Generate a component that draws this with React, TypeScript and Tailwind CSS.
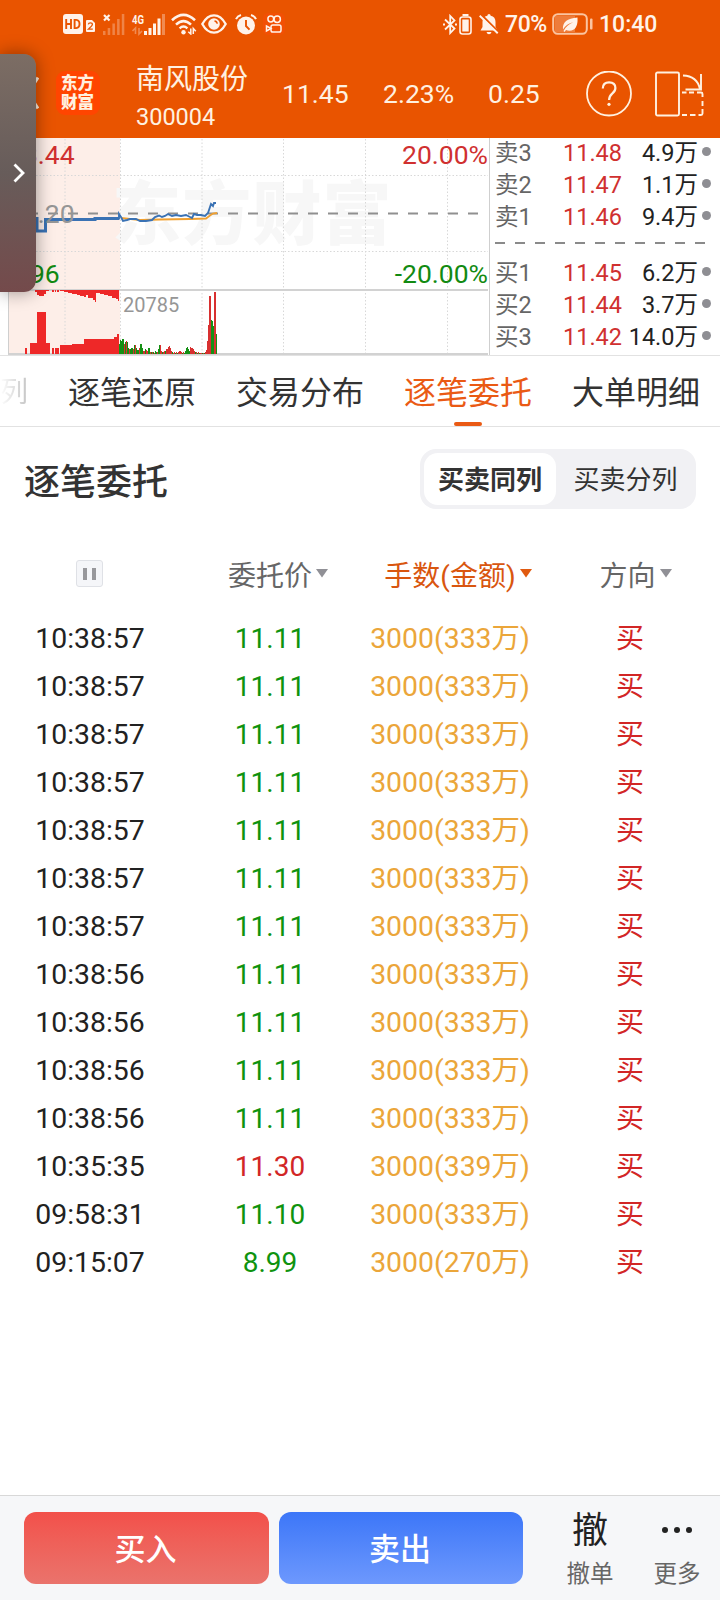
import React from "react";
import { clsx } from "clsx";

interface Order {
  time: string;
  price: string;
  lots: string;
  up?: boolean;
}

interface Quote {
  label: string;
  price: string;
  volume: string;
}

const orders: Order[] = [
  { time: "10:38:57", price: "11.11", lots: "3000(333万)" },
  { time: "10:38:57", price: "11.11", lots: "3000(333万)" },
  { time: "10:38:57", price: "11.11", lots: "3000(333万)" },
  { time: "10:38:57", price: "11.11", lots: "3000(333万)" },
  { time: "10:38:57", price: "11.11", lots: "3000(333万)" },
  { time: "10:38:57", price: "11.11", lots: "3000(333万)" },
  { time: "10:38:57", price: "11.11", lots: "3000(333万)" },
  { time: "10:38:56", price: "11.11", lots: "3000(333万)" },
  { time: "10:38:56", price: "11.11", lots: "3000(333万)" },
  { time: "10:38:56", price: "11.11", lots: "3000(333万)" },
  { time: "10:38:56", price: "11.11", lots: "3000(333万)" },
  { time: "10:35:35", price: "11.30", lots: "3000(339万)", up: true },
  { time: "09:58:31", price: "11.10", lots: "3000(333万)" },
  { time: "09:15:07", price: "8.99", lots: "3000(270万)" },
];

const asks: Quote[] = [
  { label: "卖3", price: "11.48", volume: "4.9万" },
  { label: "卖2", price: "11.47", volume: "1.1万" },
  { label: "卖1", price: "11.46", volume: "9.4万" },
];

const bids: Quote[] = [
  { label: "买1", price: "11.45", volume: "6.2万" },
  { label: "买2", price: "11.44", volume: "3.7万" },
  { label: "买3", price: "11.42", volume: "14.0万" },
];

const tabs = ["逐笔还原", "交易分布", "逐笔委托", "大单明细"];

// [x, width, height] of the call auction bars
const auctionBars = [
  [25, 2, 6],
  [30, 7, 11],
  [37, 9, 42],
  [46, 4, 11],
  [52, 2, 6],
  [55, 4, 6],
  [60, 12, 9],
  [72, 12, 10],
  [84, 30, 15],
  [114, 3, 17],
  [117, 2, 20],
];

const hangingBars = [
  [35, 2, 2],
  [37, 2, 5],
  [39, 5, 6],
  [44, 2, 4],
  [46, 3, 1],
  [52, 2, 2],
  [55, 1, 2],
  [57, 2, 2],
  [60, 4, 1],
  [64, 4, 2],
  [68, 4, 3],
  [72, 5, 4],
  [77, 3, 5],
  [80, 4, 6],
  [84, 2, 7],
  [86, 2, 5],
  [88, 5, 8],
  [93, 2, 10],
  [95, 1, 12],
  [96, 4, 3],
  [100, 4, 4],
  [104, 4, 5],
  [108, 4, 6],
  [112, 4, 8],
  [116, 2, 9],
  [118, 1, 11],
];

// one bar per pixel from x=119, the letter marks the colour
const session =
  "g10 g14 g13 g15 g15 r10 g12 r13 g12 g6 r5 g5 g6 g6 r5 g9 r9 g6 g4 g4 r6 g10 g10 g6 r3 r3 g5 r4 r3 g6 g6 r2 g2 r2 g2 r1 g3 g2 r2 g5 g9 r9 r3 g2 r2 r3 g3 r5 r5 r7 r8 r6 r3 g2 r1 r2 g1 r2 g1 r2 r3 r3 r2 g1 r2 g1 g3 g6 g7 g5 g3 r7 r6 r6 r5 r3 g2 r2 g1 r2 g1 r1 r1 g1 r1 g1 r2 r4 r13 r29 r58 r58 g34 g33 g28 r62 r62 g20".split(
    " "
  );

function HdIcon() {
  return (
    <svg width="20" height="20" viewBox="0 0 20 20">
      <rect width="20" height="20" rx="3" fill="#fff3ea" />
      <path
        d="M3.2 5v10M8 5v10M3.2 10H8M11.6 5.9v8.2h1.6q3.3-.3 3.3-4.1t-3.3-4.1z"
        stroke="#e95400"
        strokeWidth="1.9"
        fill="none"
      />
    </svg>
  );
}

function SimIcon() {
  return (
    <svg width="9" height="12" viewBox="0 0 9 12">
      <path d="M0 1q0-1 1-1h5l3 3v8q0 1-1 1H1q-1 0-1-1z" fill="#fff3ea" />
      <path d="M2.3 4.3q.3-1.4 2.1-1.4 2 0 2 1.7 0 1-4 4.6h4.4" stroke="#e95400" strokeWidth="1.3" fill="none" />
    </svg>
  );
}

function NoSignalIcon() {
  return (
    <svg width="22" height="21" viewBox="0 0 22 21">
      <path d="M1 1l5.500 5.500M6.500 1L1 6.500" stroke="#fff3ea" strokeWidth="2.200" />
      <g fill="#fff3ea" opacity=".3">
        <rect x="0" y="17" width="2.500" height="4" />
        <rect x="4.700" y="14" width="2.500" height="7" />
        <rect x="9.400" y="9.500" width="2.500" height="11.500" />
        <rect x="14.100" y="5" width="2.500" height="16" />
        <rect x="18.800" y="0" width="2.500" height="21" />
      </g>
    </svg>
  );
}

function SignalIcon() {
  return (
    <svg className="overflow-visible" width="34" height="21" viewBox="0 0 34 21">
      <text x="0" y="9.500" fontSize="13" fontWeight="700" textLength="12" lengthAdjust="spacingAndGlyphs" fill="#fff3ea">
        4G
      </text>
      <path d="M3.500 20v-6l-3 3M7 14v6l3-3" stroke="#fff3ea" strokeWidth="1.600" fill="none" opacity=".35" />
      <g fill="#fff3ea">
        <rect x="12" y="17" width="3" height="4" />
        <rect x="16.500" y="14" width="3" height="7" />
        <rect x="21" y="9.500" width="3" height="11.500" />
        <rect x="25.500" y="4.500" width="3" height="16.500" />
        <rect x="30" y="0" width="3" height="21" opacity=".35" />
      </g>
    </svg>
  );
}

function WifiIcon() {
  return (
    <svg width="26" height="22" viewBox="0 0 26 22" fill="none" stroke="#fff3ea">
      <path d="M1 7.200Q12.500-3.600 24 7.200" strokeWidth="2.600" />
      <path d="M5 11.600Q12.500 4.600 20 11.600" strokeWidth="2.500" />
      <path d="M8.600 15.400Q12.500 11.800 16.400 15.400" strokeWidth="2.400" />
      <circle cx="12.500" cy="19.300" r="2.200" fill="#fff3ea" stroke="none" />
      <path d="M19.800 15.500v5.500l-2.500-2.300M22.300 21v-5.500l2.500 2.700" strokeWidth="1.500" />
    </svg>
  );
}

function EyeIcon() {
  return (
    <svg width="26" height="20" viewBox="0 0 26 20" fill="none" stroke="#fff3ea">
      <path d="M1.300 10Q6 1.300 13 1.300T24.700 10Q20 18.700 13 18.700T1.300 10z" strokeWidth="2.300" />
      <circle cx="13" cy="10" r="5.800" fill="#fff3ea" stroke="none" />
      <path d="M13.500 7q2.500.3 2.700 2.800" stroke="#e95400" strokeWidth="1.400" />
    </svg>
  );
}

function AlarmIcon() {
  return (
    <svg width="22" height="21" viewBox="0 0 22 21" fill="none" stroke="#fff3ea">
      <circle cx="11" cy="11.500" r="9" fill="#fff3ea" stroke="none" />
      <path d="M1 5.200Q2.500 2 6 1M21 5.200Q19.500 2 16 1" strokeWidth="2" />
      <path d="M11 6v6l3.500 3.700" stroke="#e95400" strokeWidth="1.900" />
    </svg>
  );
}

function VideoAppIcon() {
  return (
    <svg width="22" height="22" viewBox="0 0 22 22" fill="none" stroke="#fff3ea" strokeWidth="1.500">
      <rect width="22" height="22" rx="5" fill="#f25004" stroke="none" />
      <circle cx="7.800" cy="6" r="2.900" />
      <circle cx="14.200" cy="6.300" r="3.200" />
      <rect x="8" y="12" width="10" height="7" rx="1.800" />
      <path d="M8 15.500L3.500 13v5z" />
    </svg>
  );
}

function StatusBar() {
  return (
    <div className="flex h-12 items-center text-[23px] text-[#fff3ea]">
      <div className="flex w-[443px] items-center pl-[63px]">
        <HdIcon />
        <div className="mt-1 ml-[3px]">
          <SimIcon />
        </div>
        <div className="ml-[8px]">
          <NoSignalIcon />
        </div>
        <div className="ml-[7px]">
          <SignalIcon />
        </div>
        <div className="ml-[5px]">
          <WifiIcon />
        </div>
        <div className="ml-[4px]">
          <EyeIcon />
        </div>
        <div className="ml-[8px]">
          <AlarmIcon />
        </div>
        <div className="ml-[6px]">
          <VideoAppIcon />
        </div>
      </div>
      <svg width="14" height="21" viewBox="0 0 14 21" fill="none" stroke="#fff3ea" strokeWidth="1.800">
        <path d="M2 5.500l9.500 9L7.200 19V2l4.300 4.500L2 15.500" />
        <path d="M0 10.500h2M12 10.500h2" strokeWidth="2" />
      </svg>
      <svg className="ml-[2px]" width="13" height="21" viewBox="0 0 13 21">
        <rect x="3.500" width="6" height="2" fill="#fff3ea" />
        <rect x="1" y="3" width="11" height="17" rx="2.500" fill="none" stroke="#fff3ea" strokeWidth="1.600" />
        <rect x="3.300" y="5.500" width="6.400" height="12" fill="#fff3ea" />
      </svg>
      <svg className="ml-[7px]" width="20" height="21" viewBox="0 0 20 21">
        <path
          d="M10 0q1.500 0 1.700 1.700 4.800 1 4.800 6.300v5l2 3.500H1.500l2-3.500V8q0-5.300 4.800-6.300Q8.500 0 10 0zM7.500 18h5q-.6 2.300-2.500 2.300T7.500 18z"
          fill="#fff3ea"
        />
        <path d="M2 .5l18 18" stroke="#e95400" strokeWidth="2.200" />
        <path d="M.7 1.800l18 17.500" stroke="#fff3ea" strokeWidth="1.900" />
      </svg>
      <span className="mt-[3px] ml-[6px] w-[47px] font-medium tracking-[-0.4px]">70%</span>
      <svg width="42" height="22" viewBox="0 0 42 22">
        <rect x="3" y="3" width="20" height="16" fill="#fff3ea" opacity=".25" />
        <rect x="1.200" y="1.200" width="33.600" height="19.600" rx="4.500" fill="none" stroke="#fbc4a0" strokeWidth="2" />
        <rect x="38" y="5.500" width="2.500" height="11" rx="1" fill="#fbc4a0" />
        <path
          d="M25.500 4.500q.8 13-8 13.300-2 0-3.500-.8l-1.500 2-1-1q3.200-6.400 9.800-8.800-7 1.500-10.300 7.300Q9.800 5.500 25.500 4.500z"
          fill="#fff3ea"
        />
      </svg>
      <span className="mt-[3px] ml-[5px] font-medium">10:40</span>
    </div>
  );
}

function Header() {
  return (
    <div className="flex h-[90px] text-[#fff1e0]">
      <div className="flex w-[136px] items-start pt-[23px]">
        <svg className="mt-[5px] ml-[27px]" width="12" height="34" viewBox="0 0 12 34">
          <path d="M11 1.500L1 17l10 15.500" fill="none" stroke="#fff1e0" strokeWidth="3" />
        </svg>
        <div className="ml-[17px] flex h-[44px] w-[44px] flex-col items-center justify-center rounded-[9px] bg-[#ff4500] pr-px text-[16.500px] leading-[19px] font-black">
          <span>东方</span>
          <span>财富</span>
        </div>
      </div>
      <div className="flex w-[146px] flex-col pt-[13px]">
        <span className="text-[28px] leading-[38px]">南风股份</span>
        <span className="text-[23.500px] leading-[37px]">300004</span>
      </div>
      <div className="flex h-[92px] items-center text-[26.500px]">
        <span className="w-[101px]">11.45</span>
        <span className="w-[105px]">2.23%</span>
        <span className="w-[98px]">0.25</span>
        <svg width="46" height="46" viewBox="0 0 46 46" fill="none" stroke="#fff1e0" strokeWidth="1.800">
          <circle cx="23" cy="22.500" r="22" />
          <path d="M16.800 17.500q0-6.200 6.300-6.200t6.300 5.700q0 3-3.200 5.600-3.100 2.700-3.100 6.400" strokeWidth="2.200" />
          <circle cx="23" cy="33.300" r="1.600" fill="#fff1e0" stroke="none" />
        </svg>
        <svg className="ml-[23px]" width="49" height="46" viewBox="0 0 49 46" fill="none" stroke="#fff1e0" strokeWidth="1.900">
          <rect x="1" y="1.500" width="23" height="43" rx="1.500" />
          <path d="M27 21.500h4.500M34 21.500h5M42 21.500h4q1.500 0 1.500 1.500v3M47.500 30v5M47.500 38v4.500q0 1.500-1.500 1.500h-2.500M27 44h5M35 44h5.500" />
          <path d="M28 4.500Q42 5 45 18M46 3v15.500H30.500" />
        </svg>
      </div>
    </div>
  );
}

function Chart() {
  return (
    <svg className="h-[217px] w-[490px] shrink-0" viewBox="0 138 490 217">
      <rect x="8" y="138" width="112" height="216" fill="#fdeee8" />
      <text x="112" y="239" fontSize="69" fontWeight="900" letterSpacing="1.200" fill="#f7f7f7">
        东方财富
      </text>
      <g stroke="#d8d8d8" strokeDasharray="1.500 2">
        {[65, 120.5, 202, 283.5, 365.5, 447.5].map((x) => (
          <path key={x} d={`M${x} 139V353`} />
        ))}
        <path d="M8 175.500H488M8 251.500H488" />
      </g>
      <path d="M8 213.500H480" stroke="#909090" strokeWidth="2" strokeDasharray="10 10" />
      <path d="M8 290H488M8 354H488" stroke="#d2d2d2" strokeWidth="2" />
      <path d="M8.500 290V354M489.500 138V355" stroke="#cfcfcf" />

      <path
        d="M121 218L140 220 160 219.500 190 219 206 218.500 210 215.500 213 213.500 217 213"
        fill="none"
        stroke="#f0a030"
        strokeWidth="1.800"
      />
      <path d="M30 218.500H37V231H45.500V219.500H95V218.500H119" fill="none" stroke="#3a72b4" strokeWidth="3" />
      <path
        d="M95 218.500H119V214L121 217 123 221 127 220 130 219 136 219 140 221 146 221 152 220 155 217 159 215.500 162 217 165 216 168 214 172 216 176 215 181 216 186 215 190 217 192 218 194 214 197 215 201 215 205 216 208 213 210 207 211 204 213 206 214 203 216 203"
        fill="none"
        stroke="#3a72b4"
        strokeWidth="1.900"
      />

      <g fill="#ee2828">
        {hangingBars.map(([x, w, h]) => (
          <rect key={x} x={x} y="290" width={w} height={h} />
        ))}
        {auctionBars.map(([x, w, h]) => (
          <rect key={x} x={x} y={354 - h} width={w} height={h} />
        ))}
      </g>
      {session.map((bar, i) => {
        const h = Number(bar.slice(1));
        return (
          <rect
            key={i}
            x={119 + i}
            y={354 - h}
            width="1"
            height={h}
            fill={bar[0] === "g" ? "#159015" : "#d83030"}
          />
        );
      })}

      <g fontSize="26.500">
        <text x="8" y="164" fill="#d03030">13.44</text>
        <text x="8" y="222.500" fill="#969696">11.20</text>
        <text x="8" y="283" fill="#128a12">8.96</text>
        <text x="488" y="164" textAnchor="end" fill="#d03030">20.00%</text>
        <text x="488" y="283" textAnchor="end" fill="#128a12">-20.00%</text>
      </g>
      <text x="123" y="312" fontSize="20" fill="#969696">20785</text>
    </svg>
  );
}

function QuoteRow({ label, price, volume }: Quote) {
  return (
    <div className="flex h-8 items-center text-[23.500px]">
      <span className="w-[50px] text-[#666]">{label}</span>
      <span className="w-[77px] text-right text-[#d03030]">{price}</span>
      <span className="w-[76px] text-right text-[#222]">{volume}</span>
      <span className="-mt-[5px] ml-[4px] h-[9px] w-[9px] rounded-full bg-[#8e8e93]" />
    </div>
  );
}

function OrderBook() {
  return (
    <div className="flex w-[230px] shrink-0 flex-col pl-[5px]">
      <div>
        {asks.map((q) => (
          <QuoteRow key={q.label} {...q} />
        ))}
      </div>
      <svg className="h-6" width="212" height="24">
        <path d="M0 9H212" stroke="#8a8a8a" strokeWidth="1.800" strokeDasharray="10 10" />
      </svg>
      {bids.map((q) => (
        <QuoteRow key={q.label} {...q} />
      ))}
    </div>
  );
}

function Tabs() {
  return (
    <div className="flex h-[72px] border-y border-[#e2e2e2] text-[32px] leading-[74px] text-[#333]">
      <span className="w-[68px] bg-linear-to-r from-white to-[#c4c4c4] to-[28px] bg-clip-text text-[28px] text-transparent">
        列
      </span>
      <div className="flex gap-10">
        {tabs.map((tab) => {
          const active = tab === "逐笔委托";
          return (
            <div
              key={tab}
              className={clsx(
                "flex w-32 shrink-0 flex-col items-center whitespace-nowrap",
                active && "text-[#ea5a14]"
              )}
            >
              <span className="h-[66px]">{tab}</span>
              {active && <span className="h-1 w-7 rounded-full bg-[#ea5a14]" />}
            </div>
          );
        })}
      </div>
    </div>
  );
}

function HeadCell({ text, active }: { text: string; active?: boolean }) {
  return (
    <div className={clsx("flex items-center justify-center", active ? "text-[#d9560f]" : "text-[#666]")}>
      <span className="mt-[6px]">{text}</span>
      <svg className="-mr-[16px] ml-[4px]" width="12" height="9" viewBox="0 0 12 9">
        <path d="M0 0h12L6 8.500z" fill={active ? "#e05a10" : "#909096"} />
      </svg>
    </div>
  );
}

function OrderTable() {
  return (
    <div className="text-[28px]">
      <div className="grid h-[78px] grid-cols-[179px_182px_178px_177px] pb-[1px]">
        <div className="flex items-center justify-center">
          <div className="flex h-[27px] w-[27px] items-center justify-center gap-[5px] rounded-[3px] border border-[#dfe1e6] bg-[#f5f6f9]">
            <span className="h-3 w-1 bg-[#98989c]" />
            <span className="h-3 w-1 bg-[#98989c]" />
          </div>
        </div>
        <HeadCell text="委托价" />
        <HeadCell text="手数(金额)" active />
        <HeadCell text="方向" />
      </div>
      <div className="pt-[2px]">
        {orders.map((order, i) => (
          <div key={i} className="grid h-12 grid-cols-4 items-center text-center">
            <span className="text-[28.400px] text-[#222]">{order.time}</span>
            <span className={order.up ? "text-[#d22626]" : "text-[#0f930f]"}>{order.price}</span>
            <span className="text-[28.400px] text-[#eba63a]">{order.lots}</span>
            <span className="text-[#d22626]">买</span>
          </div>
        ))}
      </div>
    </div>
  );
}

function BottomBar() {
  return (
    <div className="flex h-[105px] shrink-0 items-start border-t border-[#d8d8d8] bg-[#f6f7f9] pt-4 pl-6">
      <button className="h-[72px] w-[245px] rounded-xl bg-linear-to-b from-[#f2504a] to-[#ea736c] pt-1 pr-[2px] text-[31px] font-medium text-white">
        买入
      </button>
      <button className="ml-[10px] h-[72px] w-[244px] rounded-xl bg-linear-to-b from-[#3c76f8] to-[#6d98fd] pt-1 pr-[2px] text-[31px] font-medium text-white">
        卖出
      </button>
      <div className="ml-[43px] flex w-12 flex-col items-center text-[#666]">
        <span className="pt-px text-[36px] leading-[36px] text-[#222]">撤</span>
        <span className="mt-[9px] text-[23.500px] leading-8 whitespace-nowrap">撤单</span>
      </div>
      <div className="ml-[39px] flex w-12 flex-col items-center text-[#666]">
        <div className="flex h-[36px] items-center gap-[6px]">
          <span className="h-[6px] w-[6px] rounded-full bg-[#222]" />
          <span className="h-[6px] w-[6px] rounded-full bg-[#222]" />
          <span className="h-[6px] w-[6px] rounded-full bg-[#222]" />
        </div>
        <span className="mt-[10px] text-[23.500px] leading-8 whitespace-nowrap">更多</span>
      </div>
    </div>
  );
}

export default function App() {
  return (
    <div className="relative flex h-[1600px] w-[720px] flex-col overflow-hidden bg-white font-[Roboto,'Noto_Sans_CJK_SC',sans-serif]">
      <div className="h-[138px] shrink-0 bg-[#e95400]">
        <StatusBar />
        <Header />
      </div>
      <div className="flex h-[217px] shrink-0">
        <Chart />
        <OrderBook />
      </div>
      <Tabs />
      <div className="flex h-[108px] shrink-0 items-center justify-between pr-6 pl-6">
        <h1 className="pt-1 text-[36px] font-medium text-[#333]">逐笔委托</h1>
        <div className="-mt-1 flex h-[60px] w-[276px] rounded-[16px] bg-[#f1f1f4] p-1 text-[26px] text-[#333]">
          <div className="flex w-[132px] items-center justify-center rounded-[14px] bg-white pt-[3px] font-bold">
            买卖同列
          </div>
          <div className="flex flex-1 items-center justify-center pt-[3px] pl-[3px]">买卖分列</div>
        </div>
      </div>
      <div className="flex-1">
        <OrderTable />
      </div>
      <BottomBar />

      {/* edge drawer handle */}
      <div className="absolute top-[54px] left-0 flex h-[238px] w-9 items-center justify-center rounded-r-[12px] bg-linear-to-b from-[#7c6d64] via-[#675c5a] to-[#744a4b] shadow-[0_0_18px_rgba(0,0,0,0.4)]">
        <svg className="mr-[-1px] -mt-px" width="12" height="20" viewBox="0 0 12 20">
          <path d="M1.500 1.500l8.500 8.500-8.500 8.500" fill="none" stroke="#fff" strokeWidth="2.800" />
        </svg>
      </div>
    </div>
  );
}
